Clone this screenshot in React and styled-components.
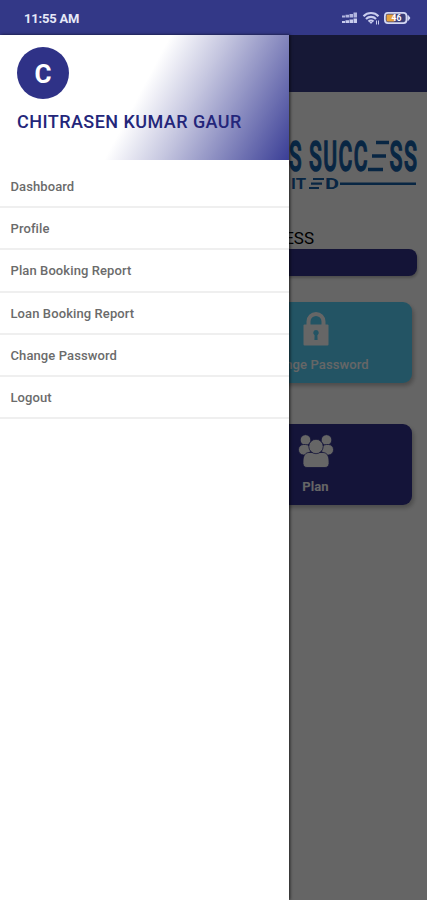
import React from "react";
import styled, { createGlobalStyle } from "styled-components";

const menuItems = [
  "Dashboard",
  "Profile",
  "Plan Booking Report",
  "Loan Booking Report",
  "Change Password",
  "Logout",
];

function StatusIcons() {
  return (
    <svg width="70" height="16" viewBox="0 0 70 16">
      <g fill="#c9cdee">
        <path d="M1 5.5h3v2H1zM4.500 4.800h3.500v2.700H4.500zM8.500 4h3.500v3.500H8.500zM12.500 2.500h3.500v5h-3.500z" opacity="0.85" />
        <path d="M1 11h3v2H1zM4.500 10.300h3.500V13H4.500zM8.500 9.600h3.500V13H8.500zM12.500 8.500h3.500V13h-3.500z" />
      </g>
      <g fill="none" stroke="#c9cdee" strokeWidth="2.1">
        <path d="M22.5 6.2a10.5 10.5 0 0 1 15 0" />
        <path d="M25 9a7 7 0 0 1 10 0" />
        <path d="M27.5 11.6a3.6 3.6 0 0 1 5 0" />
      </g>
      <path d="M28.4 12h3.2L30 14z" fill="#c9cdee" />
      <path d="M35.5 10.5v4M37.5 10.5v4" stroke="#c9cdee" strokeWidth="1" />
      <rect x="43.9" y="2.9" width="21.6" height="10.2" rx="3" fill="#3a3d78" stroke="#d3d7f3" strokeWidth="1.8" />
      <path d="M67 5.5l2 2.5-2 2.5z" fill="#d3d7f3" stroke="#d3d7f3" />
      <rect x="45.5" y="4.5" width="8.5" height="7" rx="1" fill="#e6a33d" />
      <text x="50.5" y="11" fontFamily="Roboto, sans-serif" fontSize="8.5" fontWeight="700" fill="#fff">
        46
      </text>
    </svg>
  );
}

function LogoText({ x, y, size, width, children }) {
  return (
    <text x={x} y={y} fontSize={size} textLength={width} lengthAdjust="spacingAndGlyphs">
      {children}
    </text>
  );
}

function Logo() {
  return (
    <LogoSvg width="138" height="56" viewBox="0 0 138 56">
      <g fill="#155fa8" stroke="#155fa8" strokeWidth="1.5" fontFamily="Roboto, sans-serif" fontWeight="500" letterSpacing="3">
        <LogoText x="9" y="35.7" size="42.5" width="14">S</LogoText>
        <LogoText x="29" y="35.7" size="42.5" width="60">SUCC</LogoText>
        <LogoText x="109.5" y="35.7" size="42.5" width="29">SS</LogoText>
      </g>
      <path d="M96 7.5h13M92 21h14M88 34.5h15" stroke="#155fa8" strokeWidth="3.6" />
      <g fill="#155fa8" fontFamily="Roboto, sans-serif" fontWeight="700">
        <LogoText x="11" y="54" size="15.5" width="15">IT</LogoText>
        <LogoText x="45" y="54" size="15.5" width="14">D</LogoText>
      </g>
      <path d="M33 44h11M31 48.7h11M29 53h10" stroke="#155fa8" strokeWidth="2.2" />
      <path d="M60 48.7h76" stroke="#155fa8" strokeWidth="2.4" />
    </LogoSvg>
  );
}

function LockIcon() {
  return (
    <svg width="26" height="34" viewBox="0 0 26 34">
      <path d="M5.5 14V9.5a7.5 7.5 0 0 1 15 0V14" fill="none" stroke="#fff" strokeWidth="4" />
      <rect x="0.5" y="12.5" width="25" height="21" rx="1" fill="#fff" />
      <path d="M13 18a2.8 2.8 0 0 1 1.4 5.2L14.6 28h-3.2l.2-4.8A2.8 2.8 0 0 1 13 18z" fill="#57d2fb" />
    </svg>
  );
}

function GroupIcon() {
  return (
    <svg width="36" height="34" viewBox="0 0 36 34">
      <g fill="#fff" stroke="#32328f" strokeWidth="0.8">
        <circle cx="7.5" cy="6" r="5.3" />
        <circle cx="28.5" cy="6" r="5.3" />
        <rect x="0.5" y="10.5" width="12" height="10.5" rx="5" />
        <rect x="23.5" y="10.5" width="12" height="10.5" rx="5" />
        <path d="M5 27c0-6 3-8.500 6-8.500h14c3 0 6 2.500 6 8.500v2.500c0 2.500-2 4-4 4H9c-2 0-4-1.500-4-4z" />
        <circle cx="18" cy="12.500" r="7.200" />
      </g>
    </svg>
  );
}

function App() {
  return (
    <Screen>
      <GlobalStyle />
      <StatusBar>
        <Time>11:55 AM</Time>
        <StatusIcons />
      </StatusBar>

      <Body>
        <Page>
          <Toolbar />
          <LogoRow>
            <Logo />
          </LogoRow>
          <CompanyName>SUCCESS</CompanyName>
          <Banner />
          <Card $color="#57d2fb" $gap="26px">
            <LockIcon />
            <CardLabel>Change Password</CardLabel>
          </Card>
          <Card $color="#32328f" $gap="41px">
            <GroupIcon />
            <CardLabel $bold>Plan</CardLabel>
          </Card>
        </Page>

        <Overlay />

        <Drawer>
          <DrawerHeader>
            <Avatar>C</Avatar>
            <UserName>CHITRASEN KUMAR GAUR</UserName>
          </DrawerHeader>
          <Menu>
            {menuItems.map((item) => (
              <MenuItem key={item}>{item}</MenuItem>
            ))}
          </Menu>
        </Drawer>
      </Body>
    </Screen>
  );
}

const GlobalStyle = createGlobalStyle`
  * {
    box-sizing: border-box;
  }

  body {
    margin: 0;
    font-family: Roboto, sans-serif;
  }
`;

export const Screen = styled.div`
  display: flex;
  flex-direction: column;
  width: 427px;
  height: 900px;
  overflow: hidden;
`;

export const StatusBar = styled.div`
  display: flex;
  justify-content: space-between;
  align-items: center;
  flex: none;
  height: 35px;
  padding: 1px 16px 0 24px;
  background: #333887;
`;

export const Time = styled.span`
  color: #e6e8f7;
  font-size: 13px;
  font-weight: 700;
  letter-spacing: -0.2px;
`;

export const Body = styled.div`
  position: relative;
  flex: 1;
`;

export const Page = styled.div`
  display: flex;
  flex-direction: column;
  height: 100%;
  background: #fdfdfd;
`;

export const Toolbar = styled.div`
  height: 57px;
  background: #373c87;
`;

export const LogoRow = styled.div`
  display: flex;
  justify-content: flex-end;
  margin-top: 43px;
  padding-right: 9px;
`;

export const LogoSvg = styled.svg`
  overflow: visible;
`;

export const CompanyName = styled.p`
  margin: 37px 0 1px;
  padding-right: 113px;
  color: #000;
  font-size: 17px;
  line-height: 20px;
  text-align: right;
`;

export const Banner = styled.div`
  height: 27px;
  margin: 0 10px;
  border-radius: 8px;
  background: #32328a;
  box-shadow: 1px 2px 3px rgba(0, 0, 0, 0.25);
`;

export const Card = styled.div`
  display: flex;
  flex-direction: column;
  align-items: center;
  align-self: flex-end;
  width: 193px;
  height: 81px;
  margin: ${(props) => props.$gap} 15px 0 0;
  padding-top: 10px;
  border-radius: 9px;
  background: ${(props) => props.$color};
  box-shadow: 2px 3px 4px rgba(0, 0, 0, 0.25);
`;

export const CardLabel = styled.span`
  margin-top: 11px;
  color: #fff;
  font-size: 13px;
  font-weight: ${(props) => (props.$bold ? 700 : 500)};
  line-height: 16px;
  letter-spacing: 0.1px;
`;

export const Overlay = styled.div`
  position: absolute;
  inset: 0;
  background: rgba(0, 0, 0, 0.6);
`;

export const Drawer = styled.div`
  position: absolute;
  top: 0;
  bottom: 0;
  left: 0;
  width: 289px;
  background: #fff;
  box-shadow: 1px 0 3px rgba(0, 0, 0, 0.7);
`;

export const DrawerHeader = styled.div`
  height: 125px;
  padding: 12px 17px 0;
  background: linear-gradient(118deg, #fff 48%, #c6c7e0 64%, #3a3e96 100%);
`;

export const Avatar = styled.div`
  display: flex;
  justify-content: center;
  align-items: center;
  width: 52px;
  height: 52px;
  padding-top: 1px;
  border-radius: 50%;
  background: #2f3287;
  color: #fff;
  font-size: 26px;
  font-weight: 700;
`;

export const UserName = styled.p`
  margin: 12px 0 0;
  color: #24267a;
  font-size: 18px;
  font-weight: 500;
  line-height: 22px;
  letter-spacing: 0.45px;
  white-space: nowrap;
`;

export const Menu = styled.ul`
  margin: 0;
  padding: 6px 0 0;
  list-style: none;
`;

export const MenuItem = styled.li`
  display: flex;
  align-items: center;
  height: 42.2px;
  padding: 1px 11px 0 10.5px;
  border-bottom: 2px solid #efefef;
  color: #6b6b6b;
  font-size: 13px;
  font-weight: 500;
  letter-spacing: 0.1px;
`;

export default App;
